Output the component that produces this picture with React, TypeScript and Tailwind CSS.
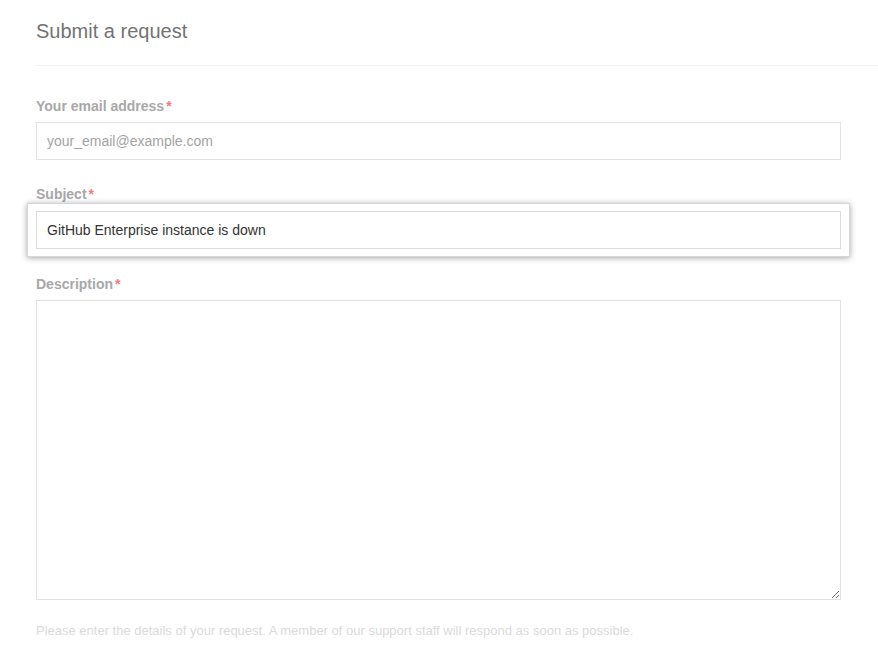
import { useState } from "react";

export default function App() {
  const [email, setEmail] = useState<string>('');
  const [subject, setSubject] = useState<string>('GitHub Enterprise instance is down');
  const [description, setDescription] = useState<string>('');

  return (
    <div className="min-h-screen bg-white font-['Liberation_Sans',Arial,sans-serif]">
      <div className="pl-[36px] pt-[19px]">
        <h1 className="text-[20px] leading-[24px] text-[#737373]">Submit a request</h1>
        <div className="mt-[22px] border-t border-[#f0f0f0]" />
      </div>

      <form className="pl-[36px] pr-[37px] pt-[30px] flex flex-col">
        <label className="text-[14px] leading-[20px] font-bold text-[#a8a8a8]">
          Your email address<span className="text-[#f27b7b] ml-[2px]">*</span>
        </label>
        <input
          type="email"
          value={email}
          placeholder="your_email@example.com"
          onChange={(e) => setEmail(e.target.value)}
          className="mt-[6px] h-[38px] w-full border border-[#e3e3e3] px-[10px] text-[14px] text-[#333] placeholder:text-[#a3a3a3] outline-none"
        />

        <label className="mt-[24px] text-[14px] leading-[20px] font-bold text-[#a8a8a8]">
          Subject<span className="text-[#f27b7b] ml-[2px]">*</span>
        </label>
        <div className="-mx-[9px] -mt-[1px] border border-[#d6d6d6] bg-white px-[8px] py-[7px] shadow-[0_1px_6px_rgba(0,0,0,0.35)]">
          <input
            type="text"
            value={subject}
            onChange={(e) => setSubject(e.target.value)}
            className="h-[38px] w-full border border-[#dcdcdc] px-[10px] text-[14px] text-[#333] outline-none"
          />
        </div>

        <label className="mt-[17px] text-[14px] leading-[20px] font-bold text-[#a8a8a8]">
          Description<span className="text-[#f27b7b] ml-[2px]">*</span>
        </label>
        <textarea
          value={description}
          onChange={(e) => setDescription(e.target.value)}
          className="mt-[6px] h-[300px] w-full border border-[#e3e3e3] px-[10px] py-[8px] text-[14px] text-[#333] outline-none"
        />

        <p className="mt-[22px] text-[13px] leading-[18px] text-[#dadada]">
          Please enter the details of your request. A member of our support staff will respond as soon as possible.
        </p>
      </form>
    </div>
  );
}
